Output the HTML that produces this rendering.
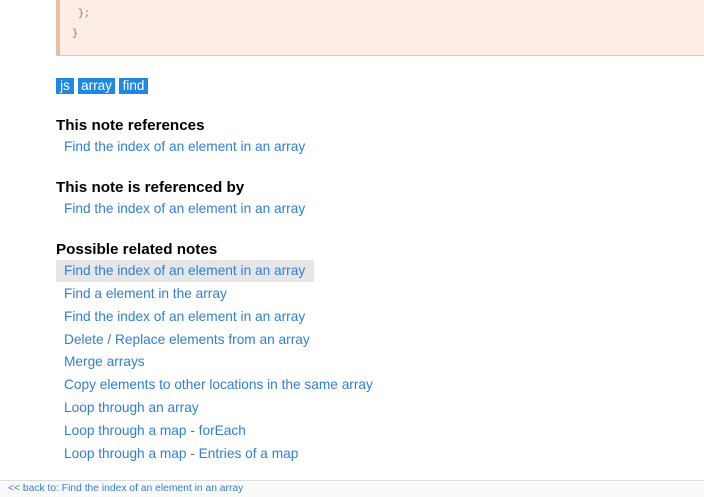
<!DOCTYPE html>
<html><head><meta charset="utf-8"><style>
body{margin:0;width:704px;height:496px;overflow:hidden;background:#fff;font-family:"Liberation Sans",sans-serif;position:relative}
.code{position:absolute;left:56px;top:0;width:648px;height:56px;background:#fdeee5;border-left:4px solid #e8bfa6;border-bottom:1px solid #e8c8b4;box-sizing:border-box;font-family:"Liberation Mono",monospace;font-size:10px;color:#777}
.code div{position:absolute}
.tag{position:absolute;top:78px;height:16px;background:#1e88e5;color:#fff;font-size:13.5px;line-height:16px;padding:0 3px;box-sizing:border-box;text-align:center}
h3{position:absolute;left:56px;margin:0;font-size:15.2px;font-weight:bold;color:#000}
a{position:absolute;left:64px;color:#2f7fd6;font-size:13.7px;text-decoration:none;white-space:nowrap}
.hl{position:absolute;left:56px;top:260px;width:258px;height:22px;background:#e6e6e6}
.foot{position:absolute;left:0;top:480px;width:704px;height:16px;border-top:1px solid #ddd;background:#fafafa}
.foot span{position:absolute;left:8px;top:2px;font-size:10.3px;color:#2f7fd6}
</style></head><body>
<div class="code"><div style="left:18px;top:9px">};</div><div style="left:12px;top:29px">}</div></div>
<div class="tag" style="left:56px;width:18px">js</div>
<div class="tag" style="left:78px;width:37px">array</div>
<div class="tag" style="left:119px;width:29px">find</div>
<h3 style="top:117px">This note references</h3>
<a style="top:139px">Find the index of an element in an array</a>
<h3 style="top:179px">This note is referenced by</h3>
<a style="top:201px">Find the index of an element in an array</a>
<h3 style="top:241px">Possible related notes</h3>
<div class="hl"></div>
<a style="top:263px">Find the index of an element in an array</a>
<a style="top:286px">Find a element in the array</a>
<a style="top:309px">Find the index of an element in an array</a>
<a style="top:332px">Delete / Replace elements from an array</a>
<a style="top:354px">Merge arrays</a>
<a style="top:377px">Copy elements to other locations in the same array</a>
<a style="top:400px">Loop through an array</a>
<a style="top:423px">Loop through a map - forEach</a>
<a style="top:446px">Loop through a map - Entries of a map</a>
<div class="foot"><span>&lt;&lt; back to: Find the index of an element in an array</span></div>
</body></html>
